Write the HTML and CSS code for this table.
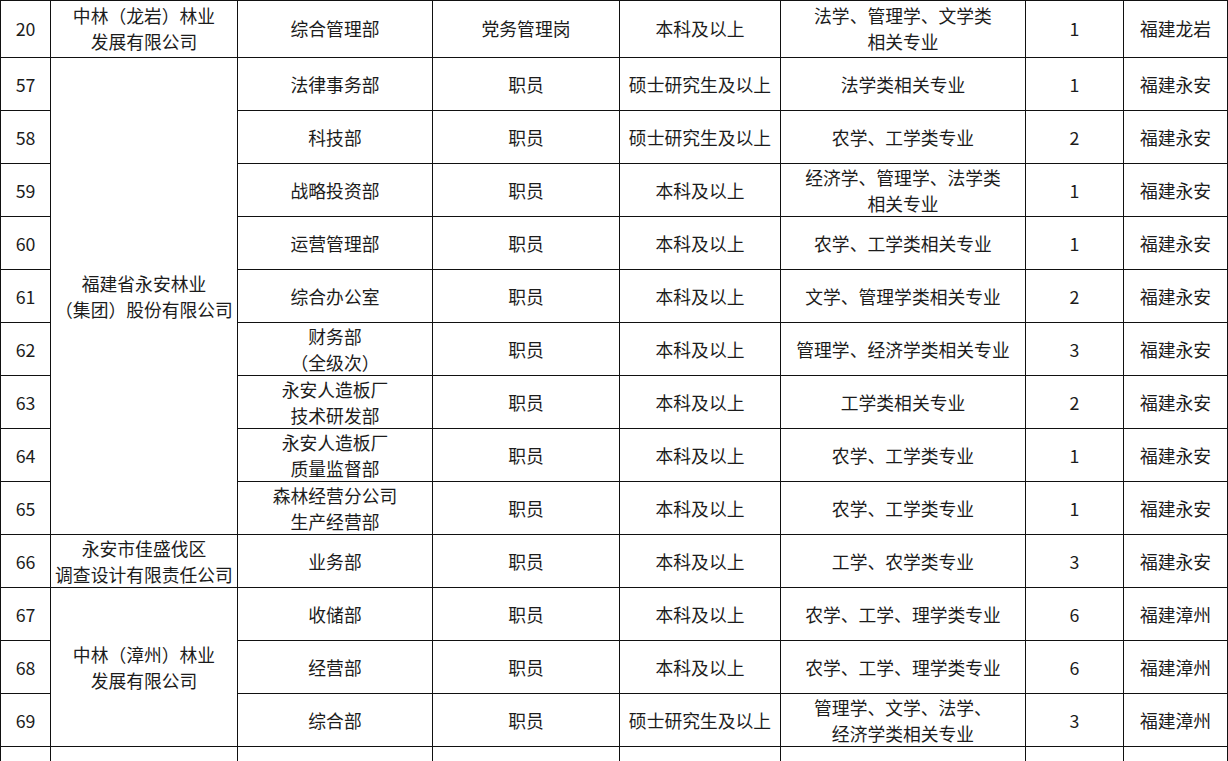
FILE: index.html
```html
<!DOCTYPE html>
<html lang="zh-CN">
<head>
<meta charset="utf-8">
<title>招聘岗位表</title>
<link rel="stylesheet" href="styles.css">
</head>
<body>
<table class="jobs">
  <colgroup>
    <col class="c-no"><col class="c-co"><col class="c-dept"><col class="c-pos"><col class="c-edu"><col class="c-major"><col class="c-num"><col class="c-loc">
  </colgroup>
  <tbody>
    <tr class="first">
      <td>20</td><td>中林（龙岩）林业<br>发展有限公司</td><td>综合管理部</td><td>党务管理岗</td><td>本科及以上</td><td>法学、管理学、文学类<br>相关专业</td><td>1</td><td>福建龙岩</td>
    </tr>
    <tr>
      <td>57</td><td rowspan="9">福建省永安林业<br>（集团）股份有限公司</td><td>法律事务部</td><td>职员</td><td>硕士研究生及以上</td><td>法学类相关专业</td><td>1</td><td>福建永安</td>
    </tr>
    <tr>
      <td>58</td><td>科技部</td><td>职员</td><td>硕士研究生及以上</td><td>农学、工学类专业</td><td>2</td><td>福建永安</td>
    </tr>
    <tr>
      <td>59</td><td>战略投资部</td><td>职员</td><td>本科及以上</td><td>经济学、管理学、法学类<br>相关专业</td><td>1</td><td>福建永安</td>
    </tr>
    <tr>
      <td>60</td><td>运营管理部</td><td>职员</td><td>本科及以上</td><td>农学、工学类相关专业</td><td>1</td><td>福建永安</td>
    </tr>
    <tr>
      <td>61</td><td>综合办公室</td><td>职员</td><td>本科及以上</td><td>文学、管理学类相关专业</td><td>2</td><td>福建永安</td>
    </tr>
    <tr>
      <td>62</td><td>财务部<br>（全级次）</td><td>职员</td><td>本科及以上</td><td>管理学、经济学类相关专业</td><td>3</td><td>福建永安</td>
    </tr>
    <tr>
      <td>63</td><td>永安人造板厂<br>技术研发部</td><td>职员</td><td>本科及以上</td><td>工学类相关专业</td><td>2</td><td>福建永安</td>
    </tr>
    <tr>
      <td>64</td><td>永安人造板厂<br>质量监督部</td><td>职员</td><td>本科及以上</td><td>农学、工学类专业</td><td>1</td><td>福建永安</td>
    </tr>
    <tr>
      <td>65</td><td>森林经营分公司<br>生产经营部</td><td>职员</td><td>本科及以上</td><td>农学、工学类专业</td><td>1</td><td>福建永安</td>
    </tr>
    <tr>
      <td>66</td><td>永安市佳盛伐区<br>调查设计有限责任公司</td><td>业务部</td><td>职员</td><td>本科及以上</td><td>工学、农学类专业</td><td>3</td><td>福建永安</td>
    </tr>
    <tr>
      <td>67</td><td rowspan="3">中林（漳州）林业<br>发展有限公司</td><td>收储部</td><td>职员</td><td>本科及以上</td><td>农学、工学、理学类专业</td><td>6</td><td>福建漳州</td>
    </tr>
    <tr>
      <td>68</td><td>经营部</td><td>职员</td><td>本科及以上</td><td>农学、工学、理学类专业</td><td>6</td><td>福建漳州</td>
    </tr>
    <tr>
      <td>69</td><td>综合部</td><td>职员</td><td>硕士研究生及以上</td><td>管理学、文学、法学、<br>经济学类相关专业</td><td>3</td><td>福建漳州</td>
    </tr>
    <tr class="partial">
      <td></td><td></td><td></td><td></td><td></td><td></td><td></td><td></td>
    </tr>
  </tbody>
</table>
</body>
</html>
```

FILE: styles.css
```css
html, body {
  margin: 0;
  padding: 0;
  background: #ffffff;
  overflow: hidden;
}

body {
  width: 1228px;
  height: 761px;
  font-family: "Noto Sans CJK SC", "Noto Sans", sans-serif;
  color: #1c1c1c;
}

.jobs {
  border-collapse: collapse;
  table-layout: fixed;
  width: 1227px;
  font-size: 17.8px;
  line-height: 26px;
}

.c-no { width: 50px; }
.c-co { width: 187px; }
.c-dept { width: 195px; }
.c-pos { width: 187px; }
.c-edu { width: 161px; }
.c-major { width: 245px; }
.c-num { width: 98px; }
.c-loc { width: 104px; }

.jobs td {
  border: 1.6px solid #111111;
  padding: 0;
  text-align: center;
  vertical-align: middle;
  white-space: nowrap;
  height: 52px;
}

.jobs tr.first td {
  height: 54px;
  padding-bottom: 2px;
}

.jobs tr.partial td {
  height: 52px;
}
```
